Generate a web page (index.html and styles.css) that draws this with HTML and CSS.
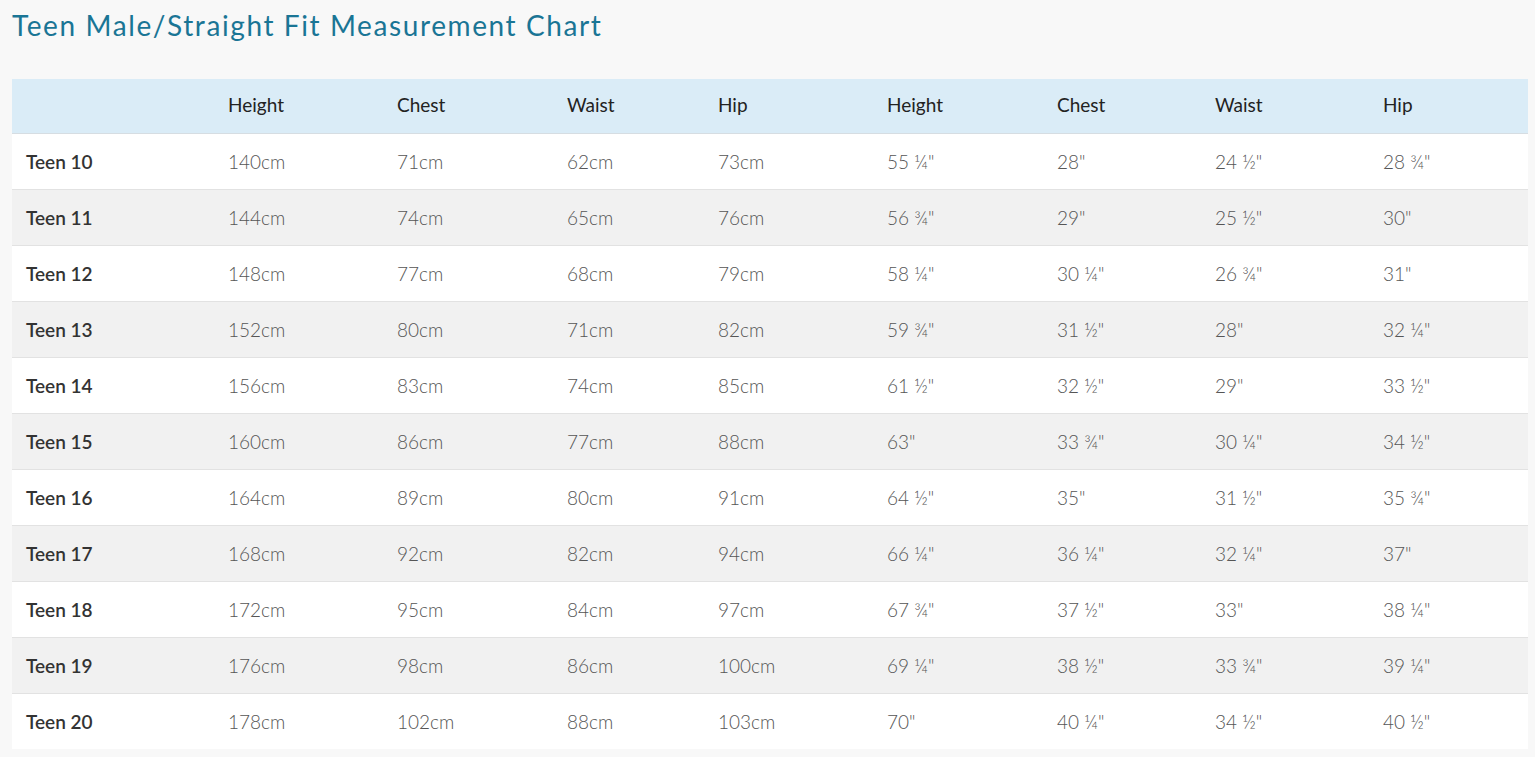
FILE: index.html
```html
<!DOCTYPE html>
<html lang="en">
<head>
<meta charset="utf-8">
<title>Teen Male/Straight Fit Measurement Chart</title>
<link rel="stylesheet" href="styles.css">
</head>
<body>
<main class="page">
  <h1 class="title">Teen Male/Straight Fit Measurement Chart</h1>
  <table class="chart">
    <colgroup>
      <col class="c-size"><col class="c1"><col class="c2"><col class="c3"><col class="c4"><col class="c5"><col class="c6"><col class="c7"><col class="c8">
    </colgroup>
    <thead>
      <tr><th></th><th>Height</th><th>Chest</th><th>Waist</th><th>Hip</th><th>Height</th><th>Chest</th><th>Waist</th><th>Hip</th></tr>
    </thead>
    <tbody>
      <tr><th>Teen 10</th><td>140cm</td><td>71cm</td><td>62cm</td><td>73cm</td><td>55 ¼"</td><td>28"</td><td>24 ½"</td><td>28 ¾"</td></tr>
      <tr><th>Teen 11</th><td>144cm</td><td>74cm</td><td>65cm</td><td>76cm</td><td>56 ¾"</td><td>29"</td><td>25 ½"</td><td>30"</td></tr>
      <tr><th>Teen 12</th><td>148cm</td><td>77cm</td><td>68cm</td><td>79cm</td><td>58 ¼"</td><td>30 ¼"</td><td>26 ¾"</td><td>31"</td></tr>
      <tr><th>Teen 13</th><td>152cm</td><td>80cm</td><td>71cm</td><td>82cm</td><td>59 ¾"</td><td>31 ½"</td><td>28"</td><td>32 ¼"</td></tr>
      <tr><th>Teen 14</th><td>156cm</td><td>83cm</td><td>74cm</td><td>85cm</td><td>61 ½"</td><td>32 ½"</td><td>29"</td><td>33 ½"</td></tr>
      <tr><th>Teen 15</th><td>160cm</td><td>86cm</td><td>77cm</td><td>88cm</td><td>63"</td><td>33 ¾"</td><td>30 ¼"</td><td>34 ½"</td></tr>
      <tr><th>Teen 16</th><td>164cm</td><td>89cm</td><td>80cm</td><td>91cm</td><td>64 ½"</td><td>35"</td><td>31 ½"</td><td>35 ¾"</td></tr>
      <tr><th>Teen 17</th><td>168cm</td><td>92cm</td><td>82cm</td><td>94cm</td><td>66 ¼"</td><td>36 ¼"</td><td>32 ¼"</td><td>37"</td></tr>
      <tr><th>Teen 18</th><td>172cm</td><td>95cm</td><td>84cm</td><td>97cm</td><td>67 ¾"</td><td>37 ½"</td><td>33"</td><td>38 ¼"</td></tr>
      <tr><th>Teen 19</th><td>176cm</td><td>98cm</td><td>86cm</td><td>100cm</td><td>69 ¼"</td><td>38 ½"</td><td>33 ¾"</td><td>39 ¼"</td></tr>
      <tr><th>Teen 20</th><td>178cm</td><td>102cm</td><td>88cm</td><td>103cm</td><td>70"</td><td>40 ¼"</td><td>34 ½"</td><td>40 ½"</td></tr>
    </tbody>
  </table>
</main>
</body>
</html>
```

FILE: styles.css
```css
html, body {
  margin: 0;
  padding: 0;
  background: #f8f8f8;
}
.page {
  padding: 8px 7px 0 12px;
  font-family: Lato, "Open Sans", sans-serif;
}
.title {
  margin: 0 0 37px 0;
  font-family: Lato, sans-serif;
  font-weight: 400;
  font-size: 28px;
  line-height: 34px;
  letter-spacing: 1.6px;
  color: #1a7595;
}
.chart {
  width: 1516px;
  border-collapse: collapse;
  table-layout: fixed;
}
.c-size { width: 202px; }
.c1 { width: 169px; }
.c2 { width: 170px; }
.c3 { width: 151px; }
.c4 { width: 169px; }
.c5 { width: 170px; }
.c6 { width: 158px; }
.c7 { width: 168px; }
.c8 { width: 159px; }
.chart thead tr {
  background: #daecf7;
}
.chart thead th {
  height: 51px;
  padding: 0 0 3px 14px;
  text-align: left;
  font-weight: 400;
  font-size: 19px;
  color: #222;
  border-bottom: 1px solid #d6dde2;
}
.chart tbody tr {
  background: #fff;
}
.chart tbody tr:nth-child(even) {
  background: #f1f1f1;
}
.chart tbody tr + tr {
  border-top: 1px solid #e2e2e2;
}
.chart tbody th,
.chart tbody td {
  height: 55px;
  padding: 0 0 0 14px;
  text-align: left;
}
.chart tbody th {
  font-weight: 600;
  font-size: 19px;
  color: #333;
}
.chart tbody td {
  font-weight: 300;
  font-size: 19px;
  color: #555;
}
```
